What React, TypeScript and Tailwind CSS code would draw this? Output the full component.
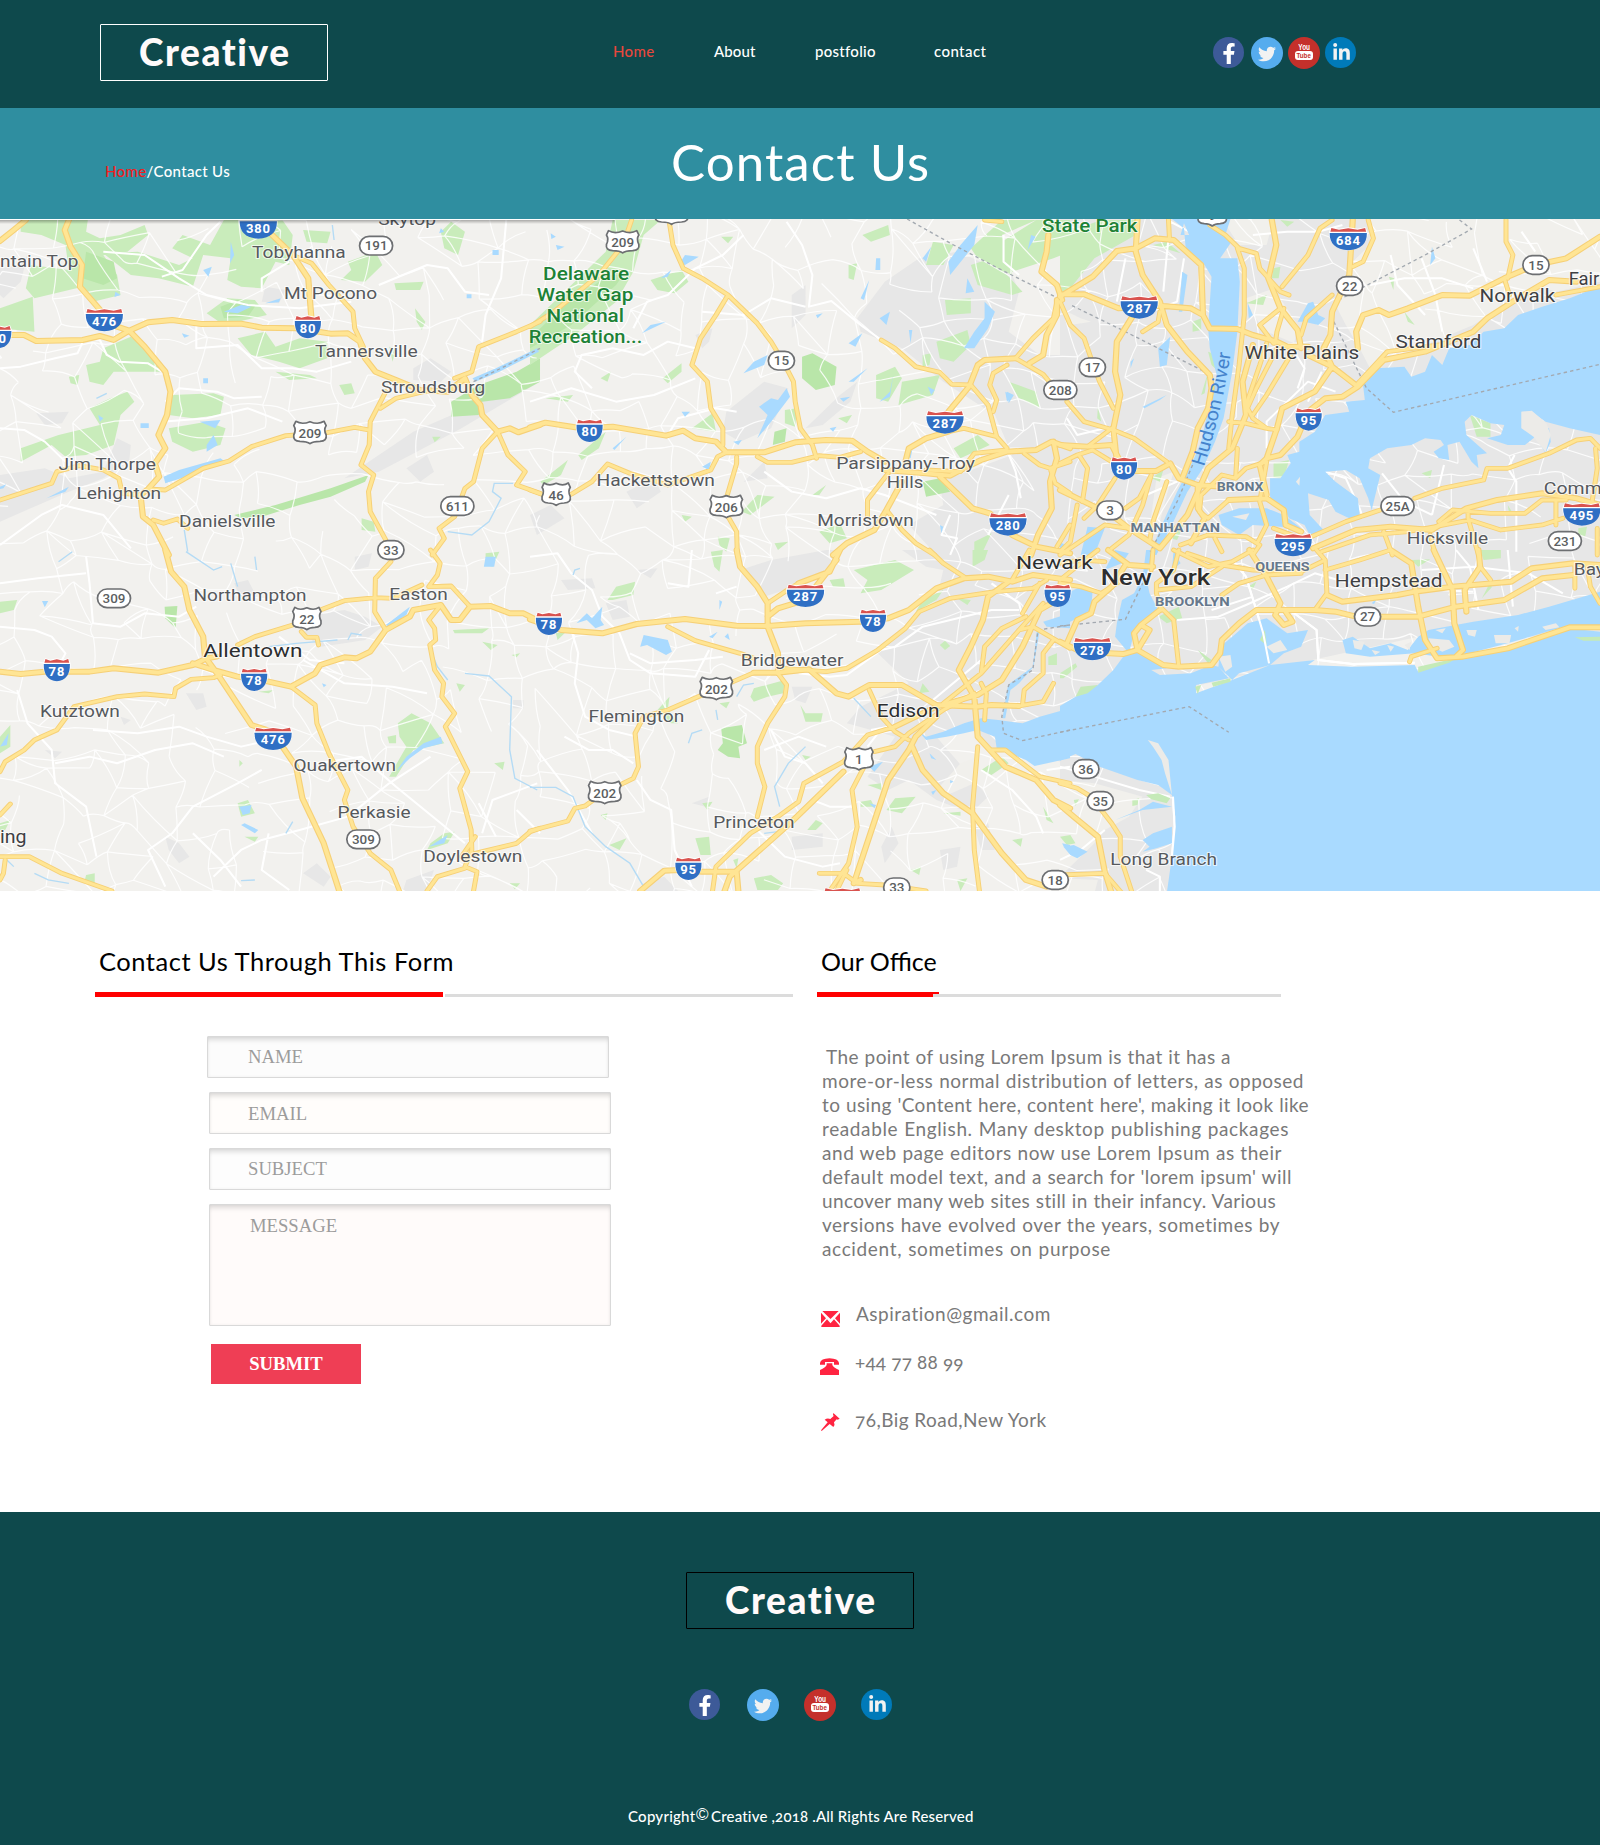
import React from "react";
import { FaFacebookF, FaTwitter, FaLinkedinIn } from "react-icons/fa";

/* ------------------------------------------------------------------ */
/* Map data: six sheets, each with its own origin and local units      */
/* ------------------------------------------------------------------ */

type Label = [x: number, y: number, w: number, text: string, kind?: string];
type Shield = [x: number, y: number, text: string];

interface Sheet {
  ox: number;
  oy: number;
  urban?: string[];
  pale?: string[];
  green: string[];
  forest?: string[];
  water: string[];
  land?: string[];
  dashes?: string[];
  streams?: string[];
  minor?: string[];
  roads: string[];
  thin?: string[];
  interstate: Shield[];
  us: Shield[];
  oval: Shield[];
  labels: Label[];
}

const sheets: Sheet[] = [
  {
    ox: 0,
    oy: 215,
    urban: [
      "M0 780L130 760L200 790L300 770L340 670L380 690L375 740L300 790L200 830L0 920Z",
      "M0 160L60 150L80 120L60 200L10 250L0 240Z",
      "M1200 460L1250 430L1310 470L1280 500L1200 495Z",
      "M105 595L200 590L180 625L130 630Z",
      "M1568 500L1340 640L1100 770L1000 790L1200 650L1400 560Z",
      "M1180 760L1240 720L1260 770L1220 800Z",
      "M770 215L830 225L810 265L760 260Z",
    ],
    green: [
      "M60 15L255 15L250 50L290 70L350 60L420 30L430 60L370 110L300 120L340 180L350 240L270 260L240 215L100 250L75 220L90 150L200 165L190 90L120 60L60 50Z",
      "M300 115L400 110L520 150L560 130L500 100L530 60L610 90L650 15L820 15L850 60L840 150L800 140L760 220L700 215L660 195L670 130L590 120L560 215L460 190L380 180Z",
      "M0 280L95 245L100 350L0 340Z",
      "M600 295L660 250L740 255L775 300L700 318L650 330Z",
      "M690 370L770 350L800 395L870 370L950 380L950 430L870 460L810 440L730 420Z",
      "M300 400L380 365L440 410L480 470L330 470L300 510L260 500L250 450L290 440Z",
      "M880 45L960 50L950 85L890 80Z",
      "M1010 140L1090 110L1110 150L1060 200L990 195L1020 165Z",
      "M1145 205L1230 200L1220 225L1150 225Z",
      "M1280 50L1310 20L1350 50L1330 120L1290 100Z",
      "M500 540L620 535L650 545L640 600L560 610L490 600Z",
      "M490 640L600 620L655 640L640 690L560 710L500 680Z",
      "M260 580L320 550L370 530L390 560L350 600L330 690L250 720L190 725L150 690L60 740L60 700L170 660L290 630Z",
      "M800 470L900 480L920 490L840 495Z",
      "M985 510L1020 505L1030 535L1000 540Z",
      "M1050 910L1085 920L1090 950L1050 945Z",
      "M1205 280L1235 320L1225 345L1210 320Z",
      "M200 485L230 480L225 510L205 505Z",
      "M1255 665L1280 665L1262 682Z",
      "M1130 395L1150 400L1140 440Z",
    ],
    forest: [
      "M250 110L330 140L340 190L300 210L240 190Z",
      "M1568 430L1500 470L1390 510L1310 560L1310 605L1390 600L1400 560L1480 550L1568 500Z",
      "M680 900L800 870L960 820L1070 780L1060 800L960 845L870 870L760 905L700 910Z",
      "M640 275L690 255L740 275L720 305L650 310Z",
    ],
    water: [
      "M475 785L520 765L640 730L650 737L540 785L480 805Z",
      "M650 290L700 270L730 275L690 295Z",
      "M770 265L815 250L810 262Z",
      "M590 165L615 155L605 185Z",
      "M580 620L640 615L625 640Z",
      "M600 690L620 660L632 690L600 710Z",
      "M408 625h24v14h-24Z",
      "M1430 105h18v15h-18Z",
      "M1372 490L1440 460L1560 400L1565 410L1450 470L1380 500Z",
      "M0 815L18 808L10 820L0 822Z",
      "M135 850L200 815L190 830Z",
      "M590 490h14v15h-14Z",
      "M670 80L680 120L668 145Z",
      "M1355 238h14v12h-14Z",
      "M1280 40L1290 50L1275 55Z",
      "M528 355L550 362L535 368Z",
      "M285 600L300 610L290 620Z",
      "M335 230L350 240L332 246Z",
    ],
    dashes: ["M1375 500L1470 452L1568 400"],
    streams: ["M1490 805L1435 805L1430 830L1455 850L1420 920L1370 960L1300 950", "M535 945L545 1010", "M280 550L310 535", "M965 30L970 75"],
    minor: [
      "M0 460L60 455L160 430L225 415L245 370L290 375L310 420L345 440L430 445L470 470",
      "M0 640L70 645L130 680L190 740",
      "M470 185L530 165L560 120L600 60L640 20",
      "M300 110L420 120L520 190L600 240L720 270L870 280L1020 260",
      "M760 230L760 190L840 140",
      "M570 330L570 400L690 390L760 460L850 460L920 470L1020 440",
      "M480 560L520 520L630 530L680 550L760 545",
      "M470 620L600 610L720 580L820 620",
      "M1100 210L1240 150L1300 160L1350 230L1420 240",
      "M1470 15L1455 190L1410 300L1400 380",
      "M0 990L120 900L180 870L300 900L380 1000",
    ],
    roads: [
      "M75 15L40 45L0 78",
      "M200 15L188 45L205 95L238 150L232 215L270 260L295 290L340 335L375 347L420 395L480 470L495 530L485 600L460 660L480 700L450 745L462 785L430 822L408 840L415 905L445 930L490 1020",
      "M0 360L70 360L105 378L240 375L290 363L330 375L375 347L430 322L500 315L585 327L700 326L760 338L860 340L960 356L1010 355L1045 380L1060 430L1090 470L1150 495L1220 525L1300 530L1350 490",
      "M780 50L850 120L895 190L905 320",
      "M1350 490L1370 540L1395 570L1400 600L1445 650L1480 640L1505 652L1568 630",
    ],
    thin: [
      "M860 125L905 145L955 210L1025 290L1030 340L1055 395",
      "M0 855L150 805L165 770L230 752L300 765L345 790L355 835L408 840",
      "M430 822L480 825L590 760L665 738L730 695L830 662L950 653L1030 637L1070 645",
      "M1120 530L1075 620L1072 690L1048 750L1085 780L1070 830L1075 890L1120 975",
      "M1105 580L1150 550L1250 525",
      "M1320 490L1370 470L1390 395L1500 350L1568 320",
      "M1445 650L1400 700L1375 800L1350 820L1320 905L1275 940L1290 970L1255 1020",
      "M1445 650L1475 720L1525 770L1500 810L1568 835",
      "M445 915L475 925L515 912L545 940",
    ],
    interstate: [
      [750, 37, "380"],
      [303, 315, "476"],
      [894, 336, "80"],
      [-5, 366, "80"],
    ],
    us: [[900, 652, "209"]],
    oval: [
      [1092, 92, "191"],
      [1328, 873, "611"],
      [1135, 1005, "33"],
    ],
    labels: [
      [0, 155, 228, "ntain Top"],
      [1098, 30, 168, "Skytop"],
      [732, 130, 272, "Tobyhanna"],
      [825, 252, 270, "Mt Pocono"],
      [915, 425, 298, "Tannersville"],
      [1106, 535, 303, "Stroudsburg"],
      [170, 765, 283, "Jim Thorpe"],
      [222, 852, 246, "Lehighton"],
      [520, 936, 280, "Danielsville"],
    ],
  },
  {
    ox: 530,
    oy: 215,
    urban: [
      "M1030 200L1130 130L1240 110L1400 180L1420 230L1390 350L1480 420L1568 420L1568 1020L1180 1020L1100 930L1200 870L1190 800L1400 720L1350 600L1200 500L1080 400L960 350L950 310Z",
      "M570 590L680 500L750 520L700 640L610 680L560 650Z",
      "M760 240L800 210L800 300L760 340Z",
      "M800 640L900 540L950 500L930 560L850 630Z",
      "M280 830L360 790L380 830L310 880Z",
      "M0 900L60 870L100 910L20 960Z",
      "M480 360L530 340L520 380L500 400Z",
      "M620 800L680 740L690 790Z",
    ],
    green: [
      "M240 15L380 15L330 60L300 170L250 260L130 360L0 450L0 330L100 230L220 110Z",
      "M350 195L440 165L460 200L420 235L370 225Z",
      "M1005 480L1060 455L1080 490L1040 560L1005 550Z",
      "M1280 100L1370 15L1470 15L1370 60L1400 180L1300 130Z",
      "M1470 15L1568 15L1568 110L1520 130L1400 170L1380 150L1370 80Z",
      "M1170 80L1230 90L1200 150L1150 150Z",
      "M1205 255L1280 250L1280 295L1210 300Z",
      "M1180 380L1270 345L1280 390L1230 440L1190 430Z",
      "M1280 150L1340 130L1430 230L1400 240L1300 210Z",
      "M385 490L440 445L440 470L400 505Z",
      "M1080 500L1190 480L1170 540L1070 570Z",
      "M470 640L530 595L540 650Z",
      "M740 585L775 580L770 635L740 625Z",
      "M1230 700L1300 660L1335 690L1250 730Z",
      "M615 890L660 840L710 845L640 900Z",
      "M840 950L900 925L920 970L870 985Z",
      "M1290 980L1340 955L1310 1020L1290 1020Z",
      "M1390 500L1470 530L1480 580L1420 550Z",
      "M925 150L950 145L940 195L925 190Z",
      "M140 720L220 650L200 700L150 735Z",
      "M30 800L110 735L90 780L40 810Z",
      "M965 60L1040 30L1045 60L990 80Z",
      "M820 840L860 810L840 840Z",
      "M45 550L125 540L110 560Z",
      "M555 65L590 65L575 85Z",
      "M895 610L935 600L920 625Z",
      "M545 965L580 970L570 1010L550 990Z",
      "M710 985L750 980L720 1005Z",
      "M1140 420L1165 415L1160 450L1140 455Z",
      "M205 490L235 470L225 500Z",
      "M440 900L470 905L450 920Z",
    ],
    forest: [
      "M790 425L820 415L890 455L885 510L830 525L790 490Z",
      "M0 400L120 330L250 210L270 180L230 180L100 270L0 370Z",
      "M710 650L745 640L740 680L705 690Z",
      "M1140 800L1190 790L1220 830L1150 845Z",
    ],
    water: [
      "M1250 90L1300 30L1290 90L1220 180L1215 140Z",
      "M1320 260L1350 290L1330 340L1290 400L1260 400L1290 350L1320 310Z",
      "M620 475L650 440L690 420L680 450Z",
      "M665 575L700 550L720 555L745 520L755 545L700 620L660 670L690 600Z",
      "M325 355L350 330L395 320Z",
      "M380 190L410 165L400 185Z",
      "M435 145L450 120L490 125L450 150Z",
      "M1055 480L1045 545L1015 560L1045 530Z",
      "M925 385L965 355L945 395Z",
      "M1015 310L1045 290L1035 330Z",
      "M960 250L985 195L970 255Z",
      "M1140 130L1165 95L1150 140Z",
      "M925 500L980 460L940 500Z",
      "M1005 130h12v35h-14Z",
      "M1380 530L1400 540L1385 560Z",
      "M1270 190L1290 230L1265 235Z",
      "M590 680L615 675L605 690Z",
      "M500 755L525 740L520 765Z",
      "M1100 345L1110 345L1105 385Z",
      "M1090 720L1110 705L1105 730Z",
      "M1155 515L1175 525L1165 540Z",
      "M240 700L280 665L245 705Z",
      "M60 55L75 65L62 72Z",
      "M75 90L100 95L80 105Z",
      "M1455 60L1468 65L1445 105Z",
      "M900 550L930 545L910 560Z",
      "M870 640L890 635L880 650Z",
      "M830 300L850 295L835 310Z",
      "M1190 930L1200 935L1195 955Z",
      "M440 590L465 590L450 605Z",
      "M1385 530L1405 540L1390 565Z",
    ],
    dashes: ["M1095 12L1230 90L1360 160L1530 248"],
    minor: [
      "M745 20L790 90L820 180L810 275L875 258L960 330L1020 375",
      "M500 290L620 300L700 250L800 275",
      "M1375 60L1375 140L1420 180",
      "M180 520L130 470L150 420L240 400L330 420L400 380L480 400",
      "M620 60L560 120L480 160L400 240L340 260L300 340",
      "M1385 705L1410 770L1425 850M1390 840L1330 960M1220 900L1195 960L1240 970L1220 1020",
      "M0 560L120 520L250 560L360 540L480 490",
      "M680 770L760 830L860 850L960 820L1030 840L1180 900",
      "M400 660L430 610L540 580L600 590",
    ],
    roads: [
      "M0 637L45 623L150 640L240 635L395 662L445 647L480 670L540 680L570 712L680 712L770 682L860 675L935 677L980 710L1030 740",
      "M1090 740L1100 700L1150 670L1215 650",
      "M1215 590L1275 515L1300 450L1320 435L1410 430",
      "M1505 60L1500 110L1485 170L1530 210L1545 255",
      "M1030 765L1150 775L1220 782L1260 760L1310 735L1385 710L1470 705L1515 680L1568 700",
      "M1190 785L1285 880L1335 895L1400 960L1470 995L1568 1015",
      "M1080 800L1035 885L1000 945L920 985L880 1020",
      "M1520 680L1530 730L1510 800L1515 880L1475 960L1455 1020",
      "M1450 445L1490 420L1500 360L1530 300L1530 255",
    ],
    thin: [
      "M405 25L415 90L445 160L500 190L575 240L660 325L700 380L735 440L765 500L770 560L785 640L820 690L832 730",
      "M575 240L540 300L495 370L470 450L515 500L525 580L560 640L560 690",
      "M295 15L270 90L200 180L70 290L0 335",
      "M0 825L40 840L120 838L180 800L225 747L290 775L400 810L525 765L545 725L570 712",
      "M600 725L600 745L570 850L575 905L600 950L602 1020",
      "M660 725L690 742L760 742L840 722L900 727L960 710",
      "M1215 650L1260 640L1355 665",
      "M1020 375L1060 400L1120 455L1190 472L1225 508L1280 510L1330 570L1355 665L1385 700",
      "M1410 430L1490 478L1540 540",
      "M1410 430L1460 370L1520 310L1530 260",
      "M1385 450L1345 475L1335 510L1355 555L1345 590",
      "M1150 765L1250 770L1290 715L1385 705",
      "M1040 775L980 855L980 905",
      "M1035 885L1080 945L1120 985L1175 1020",
      "M1435 715L1480 750L1510 760L1568 740",
      "M1510 760L1525 805L1568 835",
      "M1568 930L1530 995",
      "M1320 15L1370 20",
    ],
    interstate: [
      [173, 647, "80"],
      [1205, 622, "287"],
      [1388, 928, "280"],
    ],
    us: [
      [411, -6, "271"],
      [269, 80, "209"],
      [76, 837, "46"],
      [570, 874, "206"],
    ],
    oval: [
      [730, 437, "15"],
      [1540, 525, "208"],
    ],
    labels: [
      [38, 195, 250, "Delaware", "park"],
      [20, 258, 280, "Water Gap", "park"],
      [48, 320, 225, "National", "park"],
      [-4, 383, 330, "Recreation...", "park"],
      [193, 812, 344, "Hackettstown"],
      [889, 762, 403, "Parsippany-Troy"],
      [1036, 820, 106, "Hills"],
      [834, 933, 280, "Morristown"],
    ],
  },
  {
    ox: 1060,
    oy: 215,
    urban: ["M0 12H1568V1030H0Z"],
    pale: [
      "M900 12H1568V200L1440 230L1380 210L1200 330L1060 390L900 460L870 400L830 330L800 270L850 140L900 90Z",
      "M470 12H620L600 90L520 90Z",
      "M540 250L620 220L690 330L680 385L600 350L560 300Z",
      "M0 280L60 310L90 320L30 330Z",
      "M280 790L330 770L310 840L290 920L260 940Z",
    ],
    green: [
      "M0 60L120 15L225 15L220 60L100 130L30 220L0 235Z",
      "M1190 600L1250 625L1250 665L1210 665Z",
      "M620 745L665 735L650 790L620 790Z",
      "M385 320L410 310V345L385 350Z",
      "M270 90L310 80L350 115Z",
      "M620 160L640 155L635 190L615 190Z",
      "M1050 775L1080 765L1075 790Z",
      "M1505 940L1530 935L1525 965L1505 960Z",
      "M410 540L430 470L420 535Z",
      "M350 920L370 905L340 975L320 970Z",
      "M1000 290L1030 330L1010 320Z",
      "M540 265L600 240L590 270Z",
      "M430 410L455 420L450 460L440 450Z",
      "M110 575L120 620L108 610Z",
      "M955 185L970 190L968 225Z",
      "M265 790L300 765L290 800Z",
      "M1300 870L1315 895L1305 900Z",
      "M640 15L680 20L660 35Z",
    ],
    water: [
      "M325 12L360 40L365 100L420 150L440 185L430 340L435 400L455 480L440 540L410 680L385 740L340 830L300 920L260 1020H280L325 930L370 830L415 760L450 680L475 610L500 470L515 350L522 200L515 130L465 130L495 85L480 60L495 12Z",
      "M1568 215L1540 225L1480 250L1400 275L1330 300L1290 340L1230 350L1190 390L1130 400L1110 450L1080 420L1060 470L1020 485L1000 455L920 460L880 510L885 555L830 560L840 590L770 600L740 650L695 680V710L660 720L670 745L640 790L610 790V850L650 880L665 910L710 930L725 960L770 950L725 900L720 835L780 855L800 890L850 915L870 900L865 850L800 800L770 770L830 765L870 790L895 850L905 885L930 780L895 760L900 730L950 700L1020 690L1060 670L1105 675L1115 690L1085 710L1100 730L1130 735L1125 690L1160 680L1195 740L1215 760L1210 720L1240 715L1180 660L1175 620L1195 600L1250 625L1290 630L1280 660L1240 670L1300 690L1350 690L1380 665L1410 715L1425 680L1420 640L1340 640V590H1370L1410 620L1480 640L1568 660Z",
      "M460 900L520 880H600L650 900L700 940L640 935L560 930L520 960L470 930Z",
      "M240 575L310 540L290 555L245 580Z",
      "M355 170L370 180L355 290H345Z",
      "M285 400L320 365L310 450L290 455Z",
      "M690 320L720 265L735 260L750 300L770 310L750 330L710 320Z",
      "M80 935L130 940L100 1020H60Z",
      "M360 25L375 60L350 60Z",
      "M205 440L215 430L205 460Z",
      "M545 265L560 300L548 310Z",
      "M0 980L30 1000L10 1020H0Z",
      "M1080 95L1090 130L1075 150Z",
    ],
    land: ["M685 800L697 785L695 812Z", "M500 905L550 895L540 915Z", "M1340 590L1370 587L1412 625L1425 660L1410 712L1375 665L1340 640Z"],
    dashes: [
      "M35 272L180 345L420 470",
      "M1160 15L1195 42L1060 120L800 260",
      "M795 320L890 520L968 592L1568 448",
      "M385 750L340 860L262 1010",
    ],
    minor: [
      "M430 80L320 20L310 120L300 230M190 130L165 260M360 130L340 260L240 300",
      "M770 770L830 790L870 880L880 910",
      "M935 775L1000 860L1080 900M1115 750L1080 900",
      "M1320 720L1300 760L1325 800V1010",
      "M560 60L660 50L750 50L820 30",
      "M900 210L1000 190L1110 190L1200 220M1050 130L1090 240L1110 350M960 120L980 210L1060 300M1200 100L1240 200M1340 50L1380 110",
      "M600 700L600 620L720 500L800 530",
      "M20 610L50 660L130 640M340 800L250 840",
      "M690 520L710 460L680 410M760 470L720 560",
    ],
    roads: [
      "M0 245L95 185L165 108L220 100L275 70L330 75L410 150L415 300L435 340",
      "M225 15L220 110L240 180L290 260L310 330L370 410L435 480L440 520L430 580L400 640L385 710L355 790",
      "M0 238L70 238L170 280L290 272L380 280L415 300L435 340L515 342L560 360L630 380L660 395L720 395",
      "M210 305L165 380L160 470L175 540L155 640L165 740",
      "M0 690L80 695L150 690L170 730",
      "M210 768L280 768L320 745L345 790L400 810L470 815",
      "M615 15L628 90L605 190L640 280L690 345L700 400",
      "M850 15L840 180L790 290L785 360L765 400L790 455L865 515",
      "M720 420L790 455L740 530L645 580L630 640L600 730L580 750L600 840",
      "M865 515L940 435L1060 410L1200 350L1240 310L1330 250L1420 195L1500 200",
      "M865 515L820 545L770 550L720 590L690 665L640 720L600 730",
      "M490 855L600 850L650 885L655 930L700 950",
      "M400 810V880L420 910L380 985",
      "M735 1000L860 945L960 935L1080 945L1180 880L1270 855L1400 835L1500 850L1568 870",
      "M865 400L860 350L880 300L925 285L955 300L1010 280L1110 240L1190 242L1290 190L1380 150L1470 130L1568 65",
      "M560 390L530 500L540 600L500 700L430 760L370 900L290 1000",
      "M0 825L70 860L150 900L200 940L290 1000",
    ],
    thin: [
      "M315 15L318 75",
      "M290 290L285 320L240 350",
      "M0 260L30 330L70 370L90 430L115 500L155 580",
      "M20 560L70 620L155 645L215 670L310 740",
      "M80 695L150 640",
      "M0 745L50 720L95 705L150 740",
      "M55 720L80 760L65 860",
      "M160 790L110 870L70 910",
      "M190 880L230 850L265 780L240 870L200 960L150 1000",
      "M515 100L535 160V300L520 450L500 600L490 700",
      "M435 30L480 60L520 100L570 115L580 160L640 230L665 240",
      "M645 215L720 120L755 40L790 15",
      "M640 280L580 330L620 385",
      "M650 280L630 350L625 385",
      "M895 15L910 70L880 140L850 155",
      "M700 360L715 310L790 240",
      "M600 385L580 450L540 570L560 610L600 640L630 645",
      "M670 420L600 540L560 600",
      "M630 400L570 520L540 590",
      "M865 505L950 410L1100 390",
      "M600 740L540 760L510 790",
      "M1295 15V80L1315 120L1300 190M1290 190L1305 240",
      "M1440 240L1568 215",
      "M490 620L540 625L600 640",
      "M515 700L510 790L470 780L410 840L405 890L430 910L490 855",
      "M600 740L580 860L600 930L575 980",
      "M310 800L270 920L260 980",
      "M50 870L30 980L0 1010M0 1020L130 930L200 940",
      "M350 990L430 960L540 965L580 990",
      "M760 1010L900 960L1010 950L1090 935L1190 915L1280 945L1400 930L1460 910",
      "M1100 920L1140 885L1250 895H1350L1400 855H1470",
      "M730 965L830 920L930 885",
      "M1030 850L1110 820L1230 795L1240 760H1300L1420 715L1500 675L1540 670L1568 700",
      "M1185 880V910L1215 1020M1440 860V930M1555 700L1560 760L1545 860M1560 940V1020",
      "M940 950L965 1020M1075 960L1090 1020M450 970L470 1010M580 990L560 1020M620 940L700 970",
    ],
    interstate: [
      [837, 72, "684"],
      [230, 277, "287"],
      [722, 613, "95"],
      [186, 760, "80"],
      [677, 990, "295"],
      [1515, 898, "495"],
    ],
    us: [[442, -1, "9"]],
    oval: [
      [94, 457, "17"],
      [1382, 150, "15"],
      [841, 213, "22"],
      [145, 886, "3"],
      [980, 873, "25A"],
      [1466, 978, "231"],
    ],
    labels: [
      [-52, 52, 277, "State Park", "park"],
      [536, 433, 333, "White Plains", "town"],
      [974, 398, 250, "Stamford", "town"],
      [1218, 262, 220, "Norwalk", "town"],
      [1477, 210, 108, "Fairf", "town"],
      [455, 827, 136, "BRONX", "borough"],
      [205, 950, 260, "MANHATTAN", "borough"],
      [1007, 987, 236, "Hicksville"],
      [1405, 836, 168, "Comm"],
    ],
  },
  {
    ox: 0,
    oy: 550,
    urban: [
      "M930 190L1000 180L1060 200L1110 230L1060 270L1000 280L930 290L880 250Z",
      "M540 430L590 430L600 470L570 480Z",
      "M480 860L520 880L550 920L520 940L490 900Z",
      "M880 970L920 940L960 980L940 1010Z",
      "M680 100L720 90L740 130L700 150Z",
      "M1180 990L1260 960L1240 1023H1170Z",
      "M130 600L180 605L160 625Z",
      "M350 500L380 510L360 525Z",
      "M1490 450L1520 450V475L1490 475Z",
      "M1030 20L1080 10L1070 50L1030 60Z",
    ],
    green: [
      "M0 155L50 150L40 180L0 190Z",
      "M1125 560L1150 555V580L1130 580Z",
      "M1155 520L1195 490L1250 520L1290 580L1200 600L1150 680L1130 680L1180 590L1160 560Z",
      "M1315 240L1420 235L1400 250L1320 250Z",
      "M1400 275L1445 285L1425 300Z",
      "M1325 400L1350 405L1335 425Z",
      "M750 425L795 420L780 430Z",
      "M0 560L30 525L30 590L0 610Z",
      "M695 630L705 640L695 650Z",
      "M690 760L720 750L740 790L700 800Z",
      "M710 860L750 860L740 875Z",
      "M1290 850L1320 845L1300 880L1240 900L1250 880Z",
      "M1410 10L1450 5L1430 50L1410 45Z",
      "M250 975L275 970L275 1000L245 995Z",
      "M1435 640L1465 635L1460 660Z",
      "M1480 1000L1510 1000L1495 1018Z",
      "M0 820L30 810L15 840L0 840Z",
      "M1485 315L1510 310L1500 322Z",
    ],
    forest: ["M478 170L515 168L510 235L480 205Z"],
    water: [
      "M1180 620L1230 580L1280 560L1285 580L1230 595L1190 625L1150 665Z",
      "M1410 20L1440 20L1435 50L1405 50Z",
      "M122 153L140 153L130 172Z",
      "M695 770L730 765L725 790L705 795Z",
      "M1245 890L1300 855L1290 880Z",
      "M0 590L25 550L20 585Z",
      "M710 820L750 840L740 850L700 825Z",
      "M1120 225L1190 170L1180 195L1130 230Z",
      "M935 400L948 405L940 412Z",
    ],
    streams: [
      "M1350 370L1420 378L1485 440L1480 600L1495 685L1560 720",
      "M670 40L690 110",
      "M830 850L850 815M540 5L620 60L645 50",
      "M20 930L40 950M100 970L140 990L200 1000M700 992L740 990",
      "M1010 270L1020 250L1050 255M780 290L860 280L980 270",
      "M1250 300L1270 350L1300 390M740 20L745 60M170 35L210 5",
    ],
    minor: [
      "M0 100L110 85L250 70M0 230L100 240L150 260L190 310L170 350",
      "M250 20L260 100L270 220L350 230L420 190L520 200L570 170",
      "M50 420L80 520L150 600L160 700L250 770L280 920",
      "M160 640L260 620L340 640L450 600L560 580L650 620",
      "M270 540L400 550L520 530L600 560L700 590L830 560",
      "M480 1010L430 900L500 850L560 770L690 700L760 660",
      "M620 980L700 900L760 870L870 840L1010 800L1130 700L1250 620",
      "M780 850L760 960L840 1020M560 850L640 930L700 1010",
      "M1400 850L1430 750L1560 700M1390 760L1440 860M1500 780L1568 850",
      "M920 640L1050 620L1150 710L1280 820L1350 880",
      "M810 260L900 330L1000 340M880 330L1000 400L1140 410L1240 430",
    ],
    roads: [
      "M480 0L497 65L535 110L550 180L590 260L595 320L630 370L730 525L790 545L860 650L878 745L940 880L985 1023",
      "M0 365L60 372L130 365H260L330 355L460 368L560 345L600 325L630 320",
      "M560 340L620 360L690 380L780 395L845 410L915 370L930 345L1000 322L1035 325L1075 305L1120 240L1190 200L1200 180L1280 165L1310 210L1335 210L1365 170L1425 168L1480 190L1520 190L1568 215",
    ],
    thin: [
      "M845 410L915 465L920 520L955 610L1010 720L1000 750L1025 830L1075 910L1135 960L1160 1023",
      "M0 665L15 635L70 600L100 570L165 540L215 470L340 440L420 432L505 440L510 415L555 388L620 383L640 375",
      "M690 285L740 260L850 225M930 180L1000 152L1090 143L1140 145L1225 105",
      "M875 245L890 262H920L925 285",
      "M1135 35L1090 85L1088 185L1120 240",
      "M1250 0L1278 40L1270 75L1245 110L1310 108L1365 170",
      "M1280 165L1245 210L1262 235L1265 270L1248 285L1262 360L1288 400L1283 440L1320 490L1293 530L1358 665L1335 715L1368 840L1370 900L1350 950L1385 965L1375 1023",
      "M1240 1023L1270 980L1350 955",
      "M1340 920L1400 905L1500 880L1540 845L1568 835",
      "M0 920H85L180 970L325 1023M15 930L10 970L0 990M0 795L30 762",
      "M1380 860L1340 920",
    ],
    interstate: [
      [165, 360, "78"],
      [738, 389, "78"],
      [793, 566, "476"],
    ],
    us: [[891, 205, "22"]],
    oval: [
      [331, 145, "309"],
      [1055, 868, "309"],
    ],
    labels: [
      [562, 154, 328, "Northampton"],
      [1130, 150, 170, "Easton"],
      [590, 320, 288, "Allentown", "city"],
      [116, 502, 232, "Kutztown"],
      [852, 663, 298, "Quakertown"],
      [980, 805, 212, "Perkasie"],
      [0, 880, 77, "ing", "town"],
      [1229, 936, 288, "Doylestown"],
    ],
  },
  {
    ox: 530,
    oy: 550,
    urban: [
      "M610 60L700 30L860 0H900L860 60L740 120L680 140L650 90Z",
      "M1080 0H1568V640L1350 600L1260 520L1180 560L1330 740L1280 790L1180 750L1100 690L1040 720L980 680L1060 560L920 520L960 470L1100 400L1000 300L1180 150L1200 60L1150 50Z",
      "M220 160L280 150L290 200L240 210Z",
      "M90 90L180 85L190 115L110 120Z",
      "M330 1000L390 980L430 1023H320Z",
      "M760 860L850 850L850 890L760 900Z",
      "M310 60L370 55L350 85Z",
      "M760 410L820 410L800 460L770 450Z",
      "M1020 890L1050 830L1070 880L1030 940Z",
      "M1190 900L1250 890L1240 950L1200 960Z",
      "M470 760L520 740L510 770Z",
      "M1290 830L1330 820L1350 900L1310 900Z",
    ],
    pale: ["M1180 720L1250 640L1300 620L1290 700L1200 740Z"],
    green: [
      "M225 150L250 110L305 95L300 135L240 150Z",
      "M525 5L560 0L550 65L535 50Z",
      "M940 60L1060 30L1115 60L1020 120L960 130L980 90Z",
      "M870 90L910 85L915 110L880 110Z",
      "M640 440L650 415L740 390L735 430L690 440L650 455Z",
      "M370 480L405 440L400 480L430 520L410 520Z",
      "M785 465L800 490L850 490L845 515L800 515Z",
      "M1120 185L1140 150L1200 120L1180 150Z",
      "M1190 285L1205 272L1220 288L1205 300Z",
      "M1130 430L1140 400L1160 425Z",
      "M1035 780L1060 745L1120 740L1080 790Z",
      "M230 885L280 865L260 900Z",
      "M480 865L520 860L525 915L495 915Z",
      "M805 840L830 810L850 820L830 840Z",
      "M650 985L700 975L735 1000L720 1020H660Z",
      "M1310 660L1370 620L1390 640L1340 675Z",
      "M1285 0H1330L1320 30L1285 50Z",
      "M1200 790L1250 785L1250 797Z",
      "M1400 870L1430 865L1425 890Z",
      "M1240 990L1270 985L1250 1023Z",
      "M550 460L580 455L570 475Z",
      "M1505 320L1530 310V345L1505 345Z",
      "M500 760L530 755L515 780Z",
      "M75 250L105 245L80 270Z",
      "M590 930L605 925L600 955Z",
      "M790 615L815 620L800 630Z",
      "M1490 770L1520 820L1500 810Z",
      "M1105 960L1135 950L1130 975Z",
      "M205 795L225 790L220 810Z",
      "M980 705L1020 700L1020 720Z",
      "M960 755L990 750L1000 770L960 770Z",
      "M1240 145L1280 150L1270 165Z",
    ],
    forest: ["M555 535L615 525L630 580L605 590L610 625L575 620L545 600L560 580Z"],
    water: [
      "M1568 475L1480 500L1430 520L1360 510L1310 505L1260 520L1200 545L1150 560L1130 545L1150 570L1210 560L1260 550L1300 540L1350 560L1355 595L1440 630L1465 648L1568 625Z",
      "M330 255L400 270L412 305L395 315L340 285L320 290Z",
      "M135 220L165 190L180 205L210 170L205 210L215 225L190 235L165 210Z",
      "M1490 215L1568 190V235L1500 230Z",
      "M1472 240L1480 240L1462 350L1420 400L1395 420L1380 505L1372 505L1388 405L1460 350Z",
      "M1160 610L1180 630L1165 625Z",
      "M985 760L1005 765L1000 775Z",
      "M575 250L580 270L565 260Z",
      "M550 150L558 155L550 180Z",
      "M1545 880L1568 885V895L1550 890Z",
      "M985 650L1025 635L1000 665Z",
      "M1165 725L1180 720L1170 735Z",
      "M520 260L545 245L530 265Z",
      "M1220 690L1230 695L1220 700Z",
    ],
    dashes: ["M1568 540L1430 572L1375 550L1370 500L1390 405L1460 360L1475 240L1568 225"],
    streams: [
      "M0 712L75 712L125 740L160 830L220 890L290 940L330 1010",
      "M800 590L750 640L710 710L725 770",
      "M940 445L990 500M600 440L620 405L650 400",
      "M460 580L470 550L500 540M680 850L720 845M540 480L545 510",
      "M125 75L130 60L145 55",
    ],
    minor: [
      "M0 20L80 10L120 70L180 120L210 200L260 250L290 330L350 370",
      "M120 240L140 310L130 400L160 500L230 540L310 560",
      "M290 310L350 340L480 330L560 320M350 370L480 380L520 300",
      "M780 370L870 380L920 375L1020 300L1060 290L1140 230L1340 180L1420 180",
      "M1340 100L1420 160L1430 200",
      "M1170 450L1310 330M1310 660L1400 720L1470 800L1490 850",
      "M470 1010L420 900L410 780L350 750L310 690",
      "M660 840L740 920L850 950L900 940",
      "M700 540L740 620L800 640L850 700M680 600L780 560L860 590",
      "M990 540L1040 530M980 590L1010 550",
      "M1500 660L1568 650M820 750L870 770L940 770",
      "M100 560L170 600L240 600L300 640M20 600L110 720L180 850",
      "M400 100L460 110L470 0M540 130L600 110",
    ],
    roads: [
      "M0 208L90 240L210 250L310 222L450 207L600 227L690 228L800 220L960 215L1040 205L1100 180L1180 115L1260 85L1330 80L1400 95L1460 75L1568 90",
      "M690 160V230L720 310V370",
      "M690 200L720 175L800 150",
      "M650 368H720L810 358L890 430L925 440L985 405H1080L1180 465L1300 470L1340 465L1420 468",
      "M320 1023L390 962L430 960L500 965H600L605 1023",
      "M565 1023L580 980L640 925L760 815L910 665",
      "M1390 95L1330 140L1315 210L1280 290L1245 360L1290 440L1300 560L1380 650L1470 690L1520 750L1568 775",
      "M1180 500L1120 560L1100 600L1040 690L940 1000L960 990",
      "M1110 590L1140 660L1200 730L1285 790L1370 910L1440 990L1500 1010",
      "M1060 530L1180 470L1300 435L1370 390L1430 290L1480 180L1530 150",
      "M600 0L610 50L660 110L690 160",
      "M900 0L870 65L780 100M890 30L830 110",
    ],
    thin: [
      "M400 230L480 272L610 310L650 325",
      "M720 370L745 405L740 440L690 520L660 590V640L682 710L660 800",
      "M690 160L740 125L780 100",
      "M0 843L110 813L130 775L160 768L210 730L300 685L315 650L305 550L330 500L400 480L500 435L590 395L650 368",
      "M1420 468L1490 455L1520 400",
      "M740 355L860 365L920 355L1010 300L1090 235L1130 185L1220 145L1350 125L1460 115L1500 90",
      "M985 420L1020 500L1060 545L1100 570",
      "M530 1023L540 950L640 850L720 800L780 755L795 700L910 635L980 555L1060 530",
      "M1000 605L1060 590L1100 550L1200 480L1290 430",
      "M1200 460L1310 370L1420 240L1490 160",
      "M975 640L935 720L950 830L925 940L870 1023",
      "M840 970H910L950 1000L1030 1005M920 960L890 1023M1100 1015L1150 1023",
      "M1310 400L1325 430L1320 510",
      "M1300 590L1285 770L1290 900L1305 1023",
      "M1340 600H1380L1480 680L1568 700",
      "M1440 200L1370 235L1320 290L1310 370",
      "M1480 100L1430 190M1420 240L1460 230L1568 295",
      "M1520 270L1490 310V370L1435 420L1430 465",
      "M1160 0L1200 40L1260 80M1450 0L1400 90",
    ],
    interstate: [
      [55, 221, "78"],
      [800, 137, "287"],
      [996, 212, "78"],
      [1532, 137, "95"],
      [460, 956, "95"],
      [907, 1048, "195"],
    ],
    us: [
      [541, 415, "202"],
      [217, 727, "202"],
      [955, 626, "1"],
    ],
    oval: [
      [1065, 1012, "33"],
      [1525, 990, "18"],
    ],
    labels: [
      [1411, 56, 223, "Newark", "city"],
      [612, 348, 298, "Bridgewater"],
      [170, 515, 278, "Flemington"],
      [1007, 500, 182, "Edison", "city"],
      [532, 835, 236, "Princeton"],
    ],
  },
  {
    ox: 1060,
    oy: 550,
    urban: ["M0 10H1568V260H1040L600 360L0 500ZM0 600H340V1030H0Z"],
    pale: ["M0 690L100 700L240 740L200 800L130 840L110 870L0 980Z", "M0 985L110 990L100 1030H0Z"],
    green: [
      "M0 370L45 340L50 350L10 385H0Z",
      "M285 200L345 170L355 205L310 220Z",
      "M1220 0H1280V25L1230 30Z",
      "M545 110L570 95L560 118Z",
      "M1225 145L1245 105L1255 110Z",
      "M1020 30L1075 28L1040 50Z",
      "M0 860L30 855L45 880L20 885Z",
      "M210 750L230 745L225 765L210 768Z",
      "M40 750L55 748L45 768Z",
    ],
    water: [
      "M1568 245L1480 235L1300 295L1150 325L1040 365L1030 345L850 350L720 345L740 330L610 345L500 390L395 430V405L490 385L460 350L440 345L380 370L290 375L265 360L310 355L225 300L200 310L185 318L155 360L110 405L45 440L0 468V632L45 612L115 650L225 690L285 705L325 735L335 800L325 920L310 1030H1568Z",
      "M240 80L215 130L180 150L165 220L160 260L200 310L215 250L235 225L290 190L260 130L250 80L270 0H250Z",
      "M20 130L60 110L95 120L90 180L40 210L0 230V160Z",
      "M545 220L600 205L660 250L720 240L700 290L650 310L610 345L520 370L500 390L460 350L465 290L500 260Z",
      "M820 270L850 260L900 295L960 280L1010 300L1040 260L1070 240L1200 215L1330 195L1420 170L1568 125V230L1480 225L1300 280L1170 315L1100 320L1030 310L900 320L830 310Z",
      "M160 810L230 780L270 755L325 770L240 780L200 795Z",
      "M325 830L270 850L240 870L260 890L240 905L280 895L325 880Z",
      "M10 890L40 885L80 905L50 925L30 915Z",
      "M160 0L200 10L180 40L130 60L150 20Z",
      "M330 0L350 40L325 60Z",
      "M905 160L920 145L912 162Z",
    ],
    land: [
      "M255 570L285 580L315 630L325 735L305 670L295 630L270 590Z",
      "M460 320L495 315L500 350L480 365Z",
      "M600 290L640 270L660 300L620 310Z",
      "M850 270L885 275L875 300L855 295Z",
      "M1000 285L1020 275L1015 300Z",
      "M1070 265L1130 270L1145 290L1110 305L1080 290Z",
      "M1180 240L1210 240L1205 260L1185 255Z",
      "M1260 255L1310 255L1305 280L1265 280Z",
      "M1400 230L1440 220L1450 232L1410 240Z",
      "M1150 265L1165 262L1160 280Z",
      "M950 285L970 290L960 305Z",
      "M905 300L930 305L915 315Z",
      "M1320 235L1332 228L1330 245Z",
      "M1090 240L1120 235L1110 250Z",
    ],
    forest: [
      "M440 398L495 385V395L445 410Z",
      "M392 410L410 405L400 432Z",
      "M1040 350L1150 325L1130 338L1040 368Z",
      "M1495 262L1568 260V272L1520 272Z",
      "M250 735L285 730L320 745L310 760L265 748Z",
      "M45 440L60 410L110 405L80 430Z",
      "M400 300L440 330L430 340Z",
      "M580 270L595 240L600 285Z",
    ],
    dashes: ["M0 547L375 470L490 547", "M0 228L190 208L240 100"],
    minor: [
      "M500 30L540 80L570 180L590 250L607 340",
      "M680 190L745 240L750 330L850 342L1030 338",
      "M340 210L460 200L540 165L660 110L740 70L840 100",
      "M328 740L333 830L325 920",
      "M0 650L100 680L230 720L320 740",
      "M1150 0L1190 50L1215 180M1300 0L1315 170M1050 60L1200 50L1360 70L1460 130",
      "M1100 120L1200 125M440 180L560 140M250 960L290 980V1023M130 840L60 900L0 930",
      "M490 380L480 350",
    ],
    roads: [
      "M0 275L60 305L185 312L225 300L300 345L345 350L440 345L465 310L470 270L520 220L570 180H740L800 185L860 200H1040L1150 170L1290 150L1400 85L1490 75",
      "M225 300L215 250L235 225L260 240L225 300M235 225L290 180",
      "M775 135L820 155L980 135L1030 125L1140 110L1310 95L1370 55L1490 40L1568 45",
      "M960 0L1020 40L1040 170L1060 270L1095 325L1170 320L1300 295L1480 232H1568",
      "M1085 0L1140 120L1145 220L1170 300L1150 320",
      "M1215 0L1220 50L1175 120L1180 185",
      "M140 0L200 45L270 50M190 45L150 110L100 155L90 190L50 210L20 280",
      "M0 765L40 800L110 860L130 965L150 1030",
      "M550 0L600 80L640 160L625 195L650 225L675 215L655 185",
    ],
    thin: [
      "M345 350L330 210L290 170",
      "M740 180L775 130L770 30L745 0",
      "M1095 295L1020 320L1015 335",
      "M1220 50L1250 90",
      "M345 0L330 60L280 100V130L295 180",
      "M370 10L470 45L560 60L700 65L770 30",
      "M330 0L430 50L500 35L560 0",
      "M280 120L380 110L470 50",
      "M470 135L520 100L600 75L700 70",
      "M0 100L60 110L120 130L180 90M0 40L60 30L130 35M0 90L60 40L110 0",
      "M770 60L870 30L960 0",
      "M1495 40V115M1530 45L1540 110L1568 160",
      "M0 700L50 715L90 740L150 820L175 860V920L210 1030",
      "M0 975L130 970L180 1030M270 0L265 60",
    ],
    interstate: [[94, 297, "278"]],
    us: [],
    oval: [
      [893, 200, "27"],
      [75, 657, "36"],
      [117, 753, "35"],
    ],
    labels: [
      [118, 105, 318, "New York", "metro"],
      [567, 62, 158, "QUEENS", "borough"],
      [276, 167, 217, "BROOKLYN", "borough"],
      [798, 112, 313, "Hempstead", "town"],
      [1492, 75, 90, "Bay"],
      [146, 944, 310, "Long Branch"],
    ],
  },
];

const labelStyle: Record<string, { size: number; weight: number; fill: string }> = {
  plain: { size: 49, weight: 400, fill: "#56595d" },
  town: { size: 54, weight: 400, fill: "#3e4043" },
  city: { size: 57, weight: 400, fill: "#2c2e30" },
  metro: { size: 65, weight: 500, fill: "#2d2e30" },
  borough: { size: 38, weight: 700, fill: "#66788c" },
  park: { size: 54, weight: 500, fill: "#1d8236" },
};

/* Fine mesh of local streets; a fixed seed keeps it the same on each load */
function streetMesh(): string {
  let seed = 77;
  const rnd = () => {
    seed = (seed * 1664525 + 1013904223) % 4294967296;
    return seed / 4294967296;
  };
  const stepX = 31;
  const stepY = 27;
  const cols = 53;
  const rows = 27;
  const pts: [number, number][][] = [];
  for (let r = 0; r < rows; r++) {
    pts.push([]);
    for (let c = 0; c < cols; c++) {
      pts[r].push([c * stepX + (rnd() - 0.5) * 26 - 10, 212 + r * stepY + (rnd() - 0.5) * 22]);
    }
  }
  let d = "";
  const link = (a: [number, number], b: [number, number]) => {
    const mx = (a[0] + b[0]) / 2 + (rnd() - 0.5) * 9;
    const my = (a[1] + b[1]) / 2 + (rnd() - 0.5) * 9;
    d += `M${a[0].toFixed(1)} ${a[1].toFixed(1)}Q${mx.toFixed(1)} ${my.toFixed(1)} ${b[0].toFixed(1)} ${b[1].toFixed(1)}`;
  };
  for (let r = 0; r < rows; r++) {
    for (let c = 0; c < cols; c++) {
      if (c + 1 < cols && rnd() < 0.7) link(pts[r][c], pts[r][c + 1]);
      if (r + 1 < rows && rnd() < 0.64) link(pts[r][c], pts[r + 1][c]);
      if (r + 1 < rows && c + 1 < cols && rnd() < 0.14) link(pts[r][c], pts[r + 1][c + 1]);
    }
  }
  return d;
}

const mesh = streetMesh();

function Layer({ draw }: { draw: (s: Sheet) => React.ReactNode }) {
  return (
    <>
      {sheets.map((s) => (
        <g key={`${s.ox}-${s.oy}`} transform={`translate(${s.ox} ${s.oy}) scale(0.3444 0.3333)`}>
          {draw(s)}
        </g>
      ))}
    </>
  );
}

const paths = (list?: string[]) => (list ?? []).join("");

function Interstate({ x, y, text }: { x: number; y: number; text: string }) {
  const h = text.length > 2 ? 54 : 38;
  return (
    <g transform={`translate(${x} ${y})`}>
      <path
        d={`M${-h + 5} -33L${-h / 2} -29L0 -33L${h / 2} -29L${h - 5} -33L${h} -20Q${h + 4} 18 0 33Q${-h - 4} 18 ${-h} -20Z`}
        fill="#fff"
        stroke="#fff"
        strokeWidth="4"
      />
      <path d={`M${-h + 5} -33L${-h / 2} -28L0 -32L${h / 2} -28L${h - 5} -33L${h - 2} -22H${-h + 2}Z`} fill="#d9534f" />
      <path d={`M${-h} -18H${h}Q${h + 1} 30 0 34Q${-h - 1} 30 ${-h} -18Z`} fill="#2f6fc4" />
      <text y="17" textAnchor="middle" fontFamily="Roboto" fontWeight="700" fontSize="38" fill="#fff" letterSpacing="2">
        {text}
      </text>
    </g>
  );
}

function UsRoute({ x, y, text }: { x: number; y: number; text: string }) {
  const w = text.length > 2 ? 47 : 41;
  return (
    <g transform={`translate(${x} ${y})`}>
      <path
        d={`M${-w + 6} -33Q${-w / 2} -22 0 -32Q${w / 2} -22 ${w - 6} -33L${w} -20Q${w - 8} -8 ${w} 8Q${w + 3} 26 ${w - 18} 27Q8 27 0 34Q-8 27 ${-w + 18} 27Q${-w - 3} 26 ${-w} 8Q${-w + 8} -8 ${-w} -20Z`}
        fill="#fff"
        stroke="#6d6f72"
        strokeWidth="5"
        strokeLinejoin="round"
      />
      <text y="17" textAnchor="middle" fontFamily="Roboto" fontWeight="500" fontSize="39" fill="#5c5f62">
        {text}
      </text>
    </g>
  );
}

function StateRoute({ x, y, text }: { x: number; y: number; text: string }) {
  const w = text.length > 2 ? 48 : 38;
  return (
    <g transform={`translate(${x} ${y})`}>
      <rect x={-w} y="-28" width={w * 2} height="56" rx="28" fill="#fff" stroke="#6d6f72" strokeWidth="5" />
      <text y="14" textAnchor="middle" fontFamily="Roboto" fontWeight="500" fontSize="39" fill="#5c5f62">
        {text}
      </text>
    </g>
  );
}

function AreaMap() {
  return (
    <svg viewBox="0 219 1600 672" className="block h-[672px] w-[1600px] lining-nums" preserveAspectRatio="none">
      <rect y="219" width="1600" height="672" fill="#f2f1ee" />
      <Layer draw={(s) => <path d={paths(s.urban)} fill="#e7e7e7" />} />
      <Layer draw={(s) => <path d={paths(s.pale)} fill="#f1f0ec" />} />
      <Layer
        draw={(s) => (
          <>
            <path d={paths(s.green)} fill="#c9ecbb" />
            <path d={s.oy === 550 && s.ox === 1060 ? "" : paths(s.forest)} fill="#b9e6a9" />
          </>
        )}
      />
      <path d={mesh} fill="none" stroke="#fff" strokeOpacity="0.85" strokeWidth="1.2" />
      <Layer draw={(s) => <path d={paths(s.minor)} fill="none" stroke="#fff" strokeWidth="6" strokeLinejoin="round" />} />
      <Layer draw={(s) => <path d={paths(s.water)} fill="#a9daff" />} />
      <Layer draw={(s) => <path d={paths(s.land)} fill="#ecebe8" />} />
      <Layer draw={(s) => <path d={s.oy === 550 && s.ox === 1060 ? paths(s.forest) : ""} fill="#c5eab8" />} />
      <Layer draw={(s) => <path d={paths(s.streams)} fill="none" stroke="#b4dbf5" strokeWidth="4" />} />
      <Layer
        draw={(s) =>
          s.ox === 1060 && s.oy === 550 ? (
            <path
              d="M500 30L540 80L570 180L590 250L607 340M680 190L745 240L750 330L850 342L1030 338M328 740L333 830L325 920"
              fill="none"
              stroke="#fff"
              strokeWidth="6"
            />
          ) : null
        }
      />
      <Layer draw={(s) => <path d={paths(s.dashes)} fill="none" stroke="#a3a9b0" strokeWidth="4" strokeDasharray="10 9" />} />
      <g fill="none" strokeLinejoin="round" strokeLinecap="round">
        <Layer draw={(s) => <path d={paths(s.thin)} stroke="#f6d077" strokeWidth="14.5" />} />
        <Layer draw={(s) => <path d={paths(s.roads)} stroke="#f6d077" strokeWidth="18" />} />
        <Layer draw={(s) => <path d={paths(s.thin)} stroke="#ffe594" strokeWidth="9" />} />
        <Layer draw={(s) => <path d={paths(s.roads)} stroke="#ffe594" strokeWidth="11.5" />} />
      </g>
      <Layer
        draw={(s) => (
          <>
            {s.interstate.map(([x, y, t]) => (
              <Interstate key={`${x}${y}`} x={x} y={y} text={t} />
            ))}
            {s.us.map(([x, y, t]) => (
              <UsRoute key={`${x}${y}`} x={x} y={y} text={t} />
            ))}
            {s.oval.map(([x, y, t]) => (
              <StateRoute key={`${x}${y}`} x={x} y={y} text={t} />
            ))}
          </>
        )}
      />
      <Layer
        draw={(s) =>
          s.labels.map(([x, y, w, t, kind]) => {
            const k = labelStyle[kind ?? "plain"];
            return (
              <text
                key={t}
                x={x}
                y={y}
                textLength={w}
                lengthAdjust="spacingAndGlyphs"
                fontFamily="Roboto"
                fontSize={k.size}
                fontWeight={k.weight}
                fill={k.fill}
                stroke="#fff"
                strokeOpacity="0.7"
                strokeWidth="6"
                strokeLinejoin="round"
                className="[paint-order:stroke]"
              >
                {t}
              </text>
            );
          })
        }
      />
      <g transform="translate(1060 215) scale(0.3444 0.3333)">
        <path id="hudson" d="M418 755Q470 590 497 405" fill="none" />
        <text fontFamily="Roboto" fontSize="56" fill="#4583cc">
          <textPath href="#hudson" textLength="350" lengthAdjust="spacingAndGlyphs">
            Hudson River
          </textPath>
        </text>
      </g>
    </svg>
  );
}

/* ------------------------------------------------------------------ */
/* Shared pieces                                                       */
/* ------------------------------------------------------------------ */

function Logo({ border }: { border: string }) {
  return (
    <div className={`h-[57px] w-[228px] rounded-[1px] border ${border} pl-[38px] text-[37px] leading-[53px] font-black tracking-[1.6px] text-[#fffafa]`}>
      Creative
    </div>
  );
}

function Facebook() {
  return (
    <span className="flex size-[31px] items-center justify-center rounded-full bg-[#3d5a98] text-white">
      <FaFacebookF className="mt-px h-[21px] w-[14px]" />
    </span>
  );
}

function Twitter() {
  return (
    <span className="flex size-8 items-center justify-center rounded-full bg-[#55acee] text-[#f1f2f2]">
      <FaTwitter className="mt-px size-[18px]" />
    </span>
  );
}

function YouTube() {
  return (
    <span className="flex size-8 flex-col items-center rounded-full bg-[#c4302b] pt-1.5 font-['Liberation_Sans'] text-white">
      <span className="scale-x-[0.72] text-[9px] leading-[8px] font-bold">You</span>
      <span className="flex h-[9px] w-[18px] items-center justify-center rounded-[3px] bg-white text-[#c4302b]">
        <span className="scale-x-[0.82] text-[7.5px] leading-[9px] font-bold">Tube</span>
      </span>
    </span>
  );
}

function LinkedIn() {
  return (
    <span className="flex size-[31px] items-center justify-center rounded-full bg-[#007ab9] text-[#f1f2f2]">
      <FaLinkedinIn className="mb-px ml-0.5 size-[19px]" />
    </span>
  );
}

function MailIcon() {
  return (
    <svg viewBox="0 0 57 48" className="block h-4 w-[19px]">
      <path fill="#ff2441" d="M4 0H53L28.500 24ZM0 5L15 22L0 38ZM57 5V38L42 22ZM18 25L28.500 37L39 25L56 44V48H1V44Z" />
    </svg>
  );
}

function PhoneIcon() {
  return (
    <svg viewBox="0 0 57 51" className="block h-[17px] w-[19px]">
      <path fill="#ff2441" d="M0 15Q2 2 28.500 1Q55 2 57 15V20H42V12H15V20H0ZM20 16H37V21Q40 28 57 36V51H0V36Q17 28 20 21Z" />
    </svg>
  );
}

function PinIcon() {
  return (
    <svg viewBox="0 0 57 54" className="block h-[18px] w-[19px]">
      <path fill="#ff2441" d="M37 0L56 17L50 20L47 19L39 28Q43 36 37 42L26 33L2 54L0 52L20 28L11 20Q19 14 28 18L38 9L36 5Z" />
    </svg>
  );
}

const fieldShadow = "shadow-[inset_0_5px_5px_-2px_rgba(0,0,0,0.13),inset_0_0_3px_rgba(0,0,0,0.06)]";

function Field({ label, className }: { label: string; className: string }) {
  return (
    <input
      aria-label={label}
      placeholder={label}
      className={`block w-[402px] rounded-[1px] border border-[#d9d9d9] font-['Liberation_Serif',serif] text-[18.67px] placeholder:text-[#9c9c9c] placeholder:opacity-100 ${fieldShadow} ${className}`}
    />
  );
}

const officeLines: [string, string][] = [
  ["The point of using Lorem Ipsum is that it has a", "ml-1 w-[405px] tracking-[0.45px]"],
  ["more-or-less normal distribution of letters, as opposed", "w-[482px] tracking-[0.5px]"],
  ["to using 'Content here, content here', making it look like", "w-[487px] tracking-[0.4px]"],
  ["readable English. Many desktop publishing packages", "w-[467px] tracking-[0.62px]"],
  ["and web page editors now use Lorem Ipsum as their", "w-[460px] tracking-[0.55px]"],
  ["default model text, and a search for 'lorem ipsum' will", "w-[470px] tracking-[0.48px]"],
  ["uncover many web sites still in their infancy. Various", "w-[454px] tracking-[0.35px]"],
  ["versions have evolved over the years, sometimes by", "w-[458px] tracking-[0.5px]"],
  ["accident, sometimes on purpose", "w-[289px] tracking-[0.65px]"],
];

export default function App() {
  return (
    <div className="w-[1600px] bg-white font-[Lato,sans-serif] oldstyle-nums">
      <header className="flex h-[108px] items-start bg-[#0e494c] pl-[100px]">
        <div className="mt-6">
          <Logo border="border-white" />
        </div>
        <nav className="mt-[41px] ml-[285px] flex text-[15px] leading-5 font-medium text-white">
          <a className="w-[101px] tracking-[0.35px] text-[#e8473c]">Home</a>
          <a className="w-[101px] tracking-[0.1px]">About</a>
          <a className="w-[119px] tracking-[0.27px]">postfolio</a>
          <a className="w-[52px] tracking-[0.42px]">contact</a>
        </nav>
        <div className="mt-[37px] ml-[227px] flex">
          <Facebook />
          <span className="ml-[7px]"><Twitter /></span>
          <span className="ml-[5px]"><YouTube /></span>
          <span className="ml-[5px]"><LinkedIn /></span>
        </div>
      </header>

      <section className="flex h-[111px] items-start bg-[#2f8ea0]">
        <p className="mt-[53px] w-[568px] pl-[105px] text-[15px] leading-5 font-medium tracking-[0.33px] text-white">
          <span className="text-[#f51c1c]">Home</span>/Contact Us
        </p>
        <h1 className="mt-[24px] ml-[103px] text-[51px] leading-[59px] tracking-[1.1px] whitespace-nowrap text-white">Contact Us</h1>
      </section>

      <section className="relative h-[672px] overflow-hidden">
        <AreaMap />
        <div className="absolute top-0 left-0 h-[5px] w-[615px] border-t border-white bg-gradient-to-b from-black/30 to-transparent" />
      </section>

      <section className="flex h-[621px] pl-[95px]">
        <div className="w-[722px] pt-[54px]">
          <h2 className="pl-1 text-[25.5px] leading-8 tracking-[0.52px] text-black">Contact Us Through This Form</h2>
          <div className="mt-[15px] flex h-[5px] items-end gap-0.5">
            <div className="h-[5px] w-[348px] bg-[#ff0000]" />
            <div className="h-[3px] w-[348px] bg-[#dcdcdc]" />
          </div>
          <form className="mt-[39px] ml-28">
            <Field label="NAME" className="h-[42px] bg-[#fcfcfc] pl-[40px]" />
            <Field label="EMAIL" className="mt-[14px] ml-0.5 h-[42px] bg-[#fffdfb] pt-[2px] pl-[38px]" />
            <Field label="SUBJECT" className="mt-[14px] ml-0.5 h-[42px] bg-[#fdfdfd] pl-[38px]" />
            <textarea
              aria-label="MESSAGE"
              placeholder="MESSAGE"
              className={`mt-[14px] ml-0.5 block h-[122px] w-[402px] resize-none rounded-[1px] border border-[#d9d9d9] bg-[#fffbfa] pt-[10px] pl-10 font-['Liberation_Serif',serif] text-[18.67px] leading-[21px] placeholder:text-[#9c9c9c] placeholder:opacity-100 ${fieldShadow}`}
            />
            <button type="button" className="mt-[18px] ml-1 block h-10 w-[150px] bg-[#ef3e55] font-['Liberation_Serif',serif] text-[18.67px] leading-10 font-bold text-white">
              SUBMIT
            </button>
          </form>
        </div>

        <div className="w-[500px] pt-[54px]">
          <h2 className="pl-1 text-[25px] leading-8 text-black">Our Office</h2>
          <div className="mt-[15px] flex h-[5px] items-end">
            <div className="h-[5px] w-[116px] bg-[#ff0000]" />
            <div className="h-[5px] w-[348px] bg-[#dcdcdc]">
              <div className="h-0.5 w-full bg-white">
                <div className="h-0.5 w-1.5 bg-[#ff0000]" />
              </div>
            </div>
          </div>
          <div className="mt-[48px] ml-[5px] text-[19px] leading-6 text-[#797979]">
            {officeLines.map(([line, width]) => (
              <p key={line} className={`whitespace-nowrap [text-align-last:justify] ${width}`}>
                {line}
              </p>
            ))}
          </div>
          <ul className="text-[19px] leading-6 text-[#797979]">
            <li className="mt-[41px] flex pl-1">
              <span className="mt-[9px] w-[35px]"><MailIcon /></span>
              <span className="tracking-[0.5px]">Aspiration@gmail.com</span>
            </li>
            <li className="mt-[23px] flex pl-[3px]">
              <span className="mt-[8px] w-[35px]"><PhoneIcon /></span>
              <span className="tracking-[0.15px]">+44 77 88 99</span>
            </li>
            <li className="mt-[33px] flex pl-1">
              <span className="mt-[5px] w-[34px]"><PinIcon /></span>
              <span className="tracking-[0.45px]">76,Big Road,New York</span>
            </li>
          </ul>
        </div>
      </section>

      <footer className="flex h-[333px] flex-col bg-[#0e494c]">
        <div className="mt-[60px] ml-[686px]">
          <Logo border="border-black" />
        </div>
        <div className="mt-[60px] ml-[689px] flex">
          <Facebook />
          <span className="ml-[27px]"><Twitter /></span>
          <span className="ml-[25px]"><YouTube /></span>
          <span className="ml-[25px]"><LinkedIn /></span>
        </div>
        <p className="mt-[84px] ml-[628px] flex text-[15px] leading-[22px] font-medium whitespace-nowrap text-white">
          <span className="w-[68px] tracking-[0.25px]">Copyright</span>
          <span className="w-[15px] font-['Liberation_Sans'] text-[17px] leading-5 font-normal">©</span>
          <span className="tracking-[0.18px]">Creative ,2018 .All Rights Are Reserved</span>
        </p>
      </footer>
    </div>
  );
}
